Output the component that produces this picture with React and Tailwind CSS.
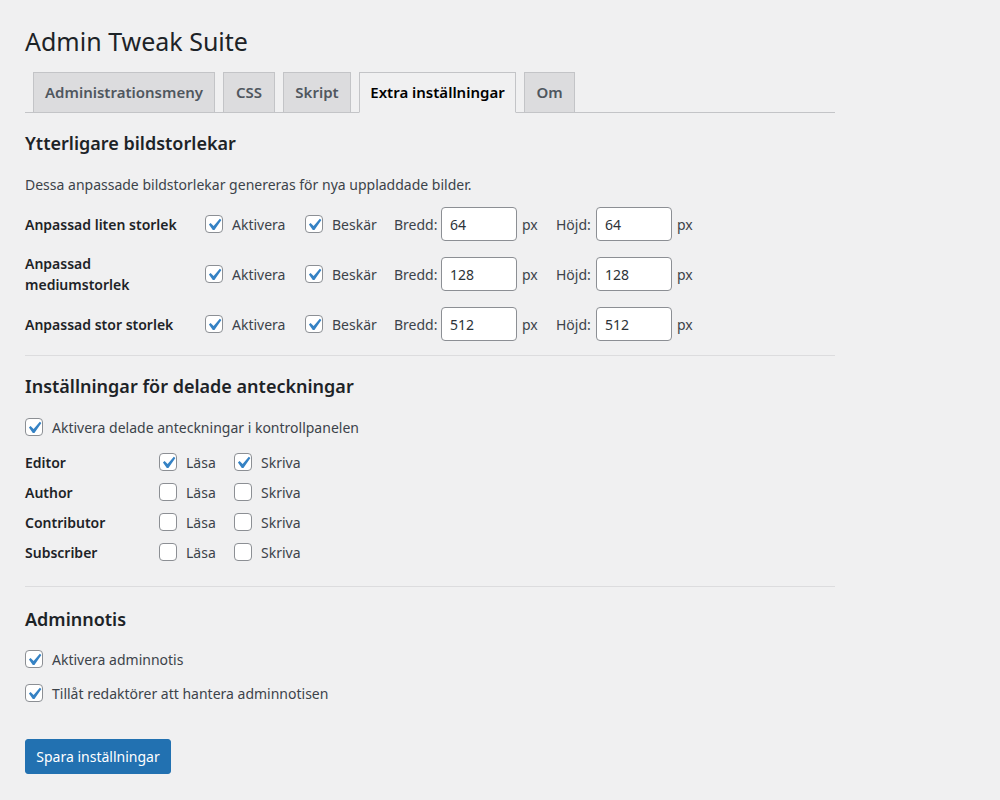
import React from 'react';

const Check = ({ checked }) => (
  <span className="relative inline-block w-[18px] h-[18px] shrink-0 rounded-[4px] border border-[#8c8f94] bg-white">
    {checked && (
      <svg viewBox="0 0 20 20" className="absolute w-[24px] h-[24px] left-[-4.5px] top-[-3px]">
        <path d="M14.83 4.89l1.34.94-5.81 8.38H9.02L5.78 9.67l1.34-1.25 2.57 2.4z" fill="#3582c4" />
      </svg>
    )}
  </span>
);

const CheckLabel = ({ checked, label, className = '' }) => (
  <label className={`flex items-center gap-[9px] text-[#3c434a] ${className}`}>
    <Check checked={checked} />
    <span>{label}</span>
  </label>
);

const NumInput = ({ value }) => (
  <div className="w-[76px] h-[34px] shrink-0 flex items-center pl-[8px] rounded-[4px] border border-[#8c8f94] bg-white text-[#2c3338]">
    {value}
  </div>
);

const tabs = [
  { label: 'Administrationsmeny', w: 'w-[182px]' },
  { label: 'CSS', w: 'w-[52px]' },
  { label: 'Skript', w: 'w-[68px]' },
  { label: 'Extra inställningar', w: 'w-[157px]', active: true },
  { label: 'Om', w: 'w-[51px]' },
];

const sizes = [
  { label: 'Anpassad liten storlek', value: '64' },
  { label: 'Anpassad mediumstorlek', value: '128' },
  { label: 'Anpassad stor storlek', value: '512' },
];

const roles = [
  { name: 'Editor', read: true, write: true },
  { name: 'Author' },
  { name: 'Contributor' },
  { name: 'Subscriber' },
];

export default function App() {
  return (
    <div className="min-h-screen bg-[#f0f0f1] text-[14px] text-[#3c434a] font-['Noto_Sans','Open_Sans',sans-serif]">
      <div className="ml-[25px] w-[810px] pt-[26px]">
        <h1 className="h-[30px] leading-[30px] text-[25px] font-normal text-[#1d2327]">Admin Tweak Suite</h1>

        {/* Tabs */}
        <nav className="mt-[16px] flex gap-[8px] pl-[8px] border-b border-[#c3c4c7]">
          {tabs.map((t) => (
            <div
              key={t.label}
              className={`${t.w} h-[41px] -mb-px flex items-center justify-center border border-[#c3c4c7] font-semibold text-[15px] ${
                t.active ? 'bg-[#f0f0f1] border-b-[#f0f0f1] text-[#000]' : 'bg-[#dcdcde] text-[#50575e]'
              }`}
            >
              {t.label}
            </div>
          ))}
        </nav>

        {/* Image sizes */}
        <h2 className="mt-[18px] h-[24px] leading-[24px] text-[18px] font-semibold text-[#1d2327]">Ytterligare bildstorlekar</h2>
        <p className="mt-[20px] h-[20px] leading-[20px] text-[#3c434a]">
          Dessa anpassade bildstorlekar genereras för nya uppladdade bilder.
        </p>
        <div className="mt-[4px]">
          {sizes.map((s) => (
            <div key={s.label} className="h-[50px] flex items-center">
              <div className="w-[180px] pr-[12px] font-semibold text-[#1d2327] leading-[21px]">{s.label}</div>
              <CheckLabel checked label="Aktivera" className="w-[100px]" />
              <CheckLabel checked label="Beskär" className="w-[89px]" />
              <span className="w-[47px]">Bredd:</span>
              <NumInput value={s.value} />
              <span className="w-[39px] pl-[5px]">px</span>
              <span className="w-[40px]">Höjd:</span>
              <NumInput value={s.value} />
              <span className="pl-[5px]">px</span>
            </div>
          ))}
        </div>

        <div className="mt-[6px] h-px bg-[#dcdcde]" />

        {/* Shared notes */}
        <h2 className="mt-[18px] h-[24px] leading-[24px] text-[18px] font-semibold text-[#1d2327]">
          Inställningar för delade anteckningar
        </h2>
        <CheckLabel checked label="Aktivera delade anteckningar i kontrollpanelen" className="mt-[19px] h-[20px]" />
        <div className="mt-[10px]">
          {roles.map((r) => (
            <div key={r.name} className="h-[30px] flex items-center">
              <div className="w-[134px] font-semibold text-[#1d2327]">{r.name}</div>
              <CheckLabel checked={r.read} label="Läsa" className="w-[75px]" />
              <CheckLabel checked={r.write} label="Skriva" />
            </div>
          ))}
        </div>

        <div className="mt-[19px] h-px bg-[#dcdcde]" />

        {/* Admin notice */}
        <h2 className="mt-[20px] h-[24px] leading-[24px] text-[18px] font-semibold text-[#1d2327]">Adminnotis</h2>
        <CheckLabel checked label="Aktivera adminnotis" className="mt-[18px] h-[20px]" />
        <CheckLabel checked label="Tillåt redaktörer att hantera adminnotisen" className="mt-[14px] h-[20px]" />

        <button className="mt-[36px] w-[146px] h-[35px] rounded-[3px] bg-[#2271b1] border border-[#2271b1] text-white text-[14px]">
          Spara inställningar
        </button>
      </div>
    </div>
  );
}
